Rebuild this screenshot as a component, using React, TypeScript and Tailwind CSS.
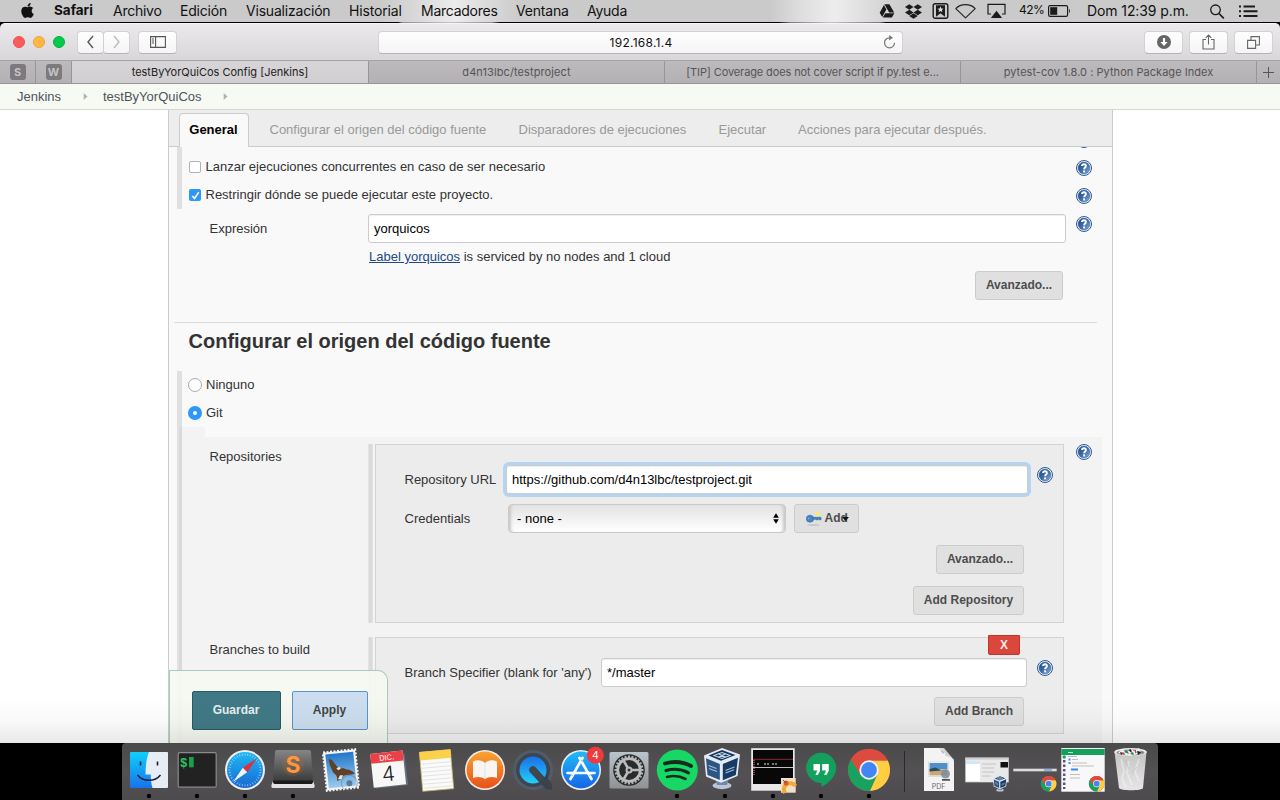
import React from "react";
import { FaApple, FaDropbox } from "react-icons/fa";

/* ---------- Menu bar ---------- */

function MenuBar() {
  return (
    <div className="h-[23px] shrink-0 bg-[linear-gradient(90deg,#000_0,#000_398px,#8e8e8e_402px,#c4c4c4_450px,#8e8e8e_492px,#000_500px,#000_778px,#777_790px,#c4c4c4_830px,#777_880px,#000_886px)]">
      <div className="flex h-[22px] items-center bg-[linear-gradient(90deg,#cacaca_0,#cacaca_380px,#d6d6d6_410px,#ececec_455px,#dedede_480px,#cbcbcb_520px,#cacaca_770px,#dedede_800px,#ededed_835px,#dcdcdc_870px,#cacaca_910px)] font-[Inter,sans-serif] text-[14px] text-[#111] [&>span]:pb-[2px]">
        <div className="flex w-[54px] justify-center pb-px">
          <FaApple className="h-[17px] w-[17px]" />
        </div>
        <span className="w-[59px] text-[13.5px] font-bold">Safari</span>
        <span className="w-[67px] tracking-[-0.25px]">Archivo</span>
        <span className="w-[66px] tracking-[-0.2px]">Edición</span>
        <span className="w-[103px] tracking-[-0.2px]">Visualización</span>
        <span className="w-[72px] tracking-[-0.15px]">Historial</span>
        <span className="w-[95px] tracking-[-0.25px]">Marcadores</span>
        <span className="w-[71px] tracking-[-0.2px]">Ventana</span>
        <span className="w-[60px] tracking-[-0.25px]">Ayuda</span>
        <div className="ml-auto flex items-center [&>span]:pb-[2px]">
          <svg className="mr-[10px] h-[22px] w-[16px]" viewBox="0 0 16 22" fill="#1b1b1b">
            <path d="M5.4 4.3h5l4.8 8.2h-5z" />
            <path d="M4.9 5.1l2.5 4.3L3.2 17 .7 12.7z" />
            <path d="M6.3 13.2h9.1L12.9 17.5H3.8z" />
          </svg>
          <FaDropbox className="mr-[10px] h-[17px] w-[17px] text-[#1b1b1b]" />
          <svg className="mr-[6px] h-[22px] w-[17px]" viewBox="0 0 17 22">
            <rect x="1.2" y="3.7" width="14.6" height="14.6" rx="2" fill="none" stroke="#1b1b1b" strokeWidth="1.4" />
            <path d="M4 5.3h9v11.5l-4.5-3.6L4 16.800z" fill="#1b1b1b" />
            <path d="M8.500 6.500l.9 2 2.100.2-1.600 1.400.5 2.100-1.900-1.100-1.900 1.100.5-2.100-1.600-1.400 2.100-.2z" fill="#ddd" />
          </svg>
          <svg className="mr-[11px] h-[22px] w-[21px]" viewBox="0 0 21 22">
            <path d="M.8 8.600C5.500 3.300 15.500 3.300 20.200 8.600L10.500 17.900z" fill="none" stroke="#222" strokeWidth="1.1" strokeLinejoin="round" />
          </svg>
          <svg className="mr-[13px] h-[22px] w-[19px]" viewBox="0 0 19 22">
            <path d="M4 14H1V4.300h17V14h-3" fill="none" stroke="#1b1b1b" strokeWidth="1.2" />
            <path d="M9.500 10.800l5.600 7.200H3.900z" fill="#1b1b1b" />
          </svg>
          <span className="w-[29px] text-[12px] tracking-[-0.5px]">42%</span>
          <svg className="mr-[16px] h-[22px] w-[23px]" viewBox="0 0 23 22">
            <rect x=".6" y="5.600" width="19" height="10.800" rx="1.600" fill="none" stroke="#1b1b1b" strokeWidth="1.200" />
            <rect x="2.200" y="7.200" width="7" height="7.600" fill="#1b1b1b" />
            <path d="M21 9c1.200.5 1.200 3.500 0 4z" fill="#1b1b1b" />
          </svg>
          <span className="w-[122px] tracking-[-0.1px] whitespace-nowrap">Dom 12:39 p.m.</span>
          <svg className="mr-[14px] h-[22px] w-[16px]" viewBox="0 0 16 22">
            <circle cx="6.500" cy="9.800" r="4.800" fill="none" stroke="#1b1b1b" strokeWidth="1.300" />
            <path d="M10 13.500l4.800 4.800" stroke="#1b1b1b" strokeWidth="1.700" />
          </svg>
          <svg className="mr-[22px] h-[22px] w-[19px]" viewBox="0 0 19 22" fill="#1b1b1b">
            <path d="M0 5.500h2v2H0zM0 10.200h2v2H0zM0 15h2v2H0zM4.500 5.500h11.500v2H4.500zM4.500 10.200h14v2h-14zM4.500 15h14v2h-14z" />
          </svg>
        </div>
      </div>
    </div>
  );
}

/* ---------- Browser chrome ---------- */

const toolButton =
  "flex h-[23px] items-center justify-center rounded-[4px] border border-[#d3d1d3] border-b-[#b5b3b5] bg-[linear-gradient(#fefefe,#f5f5f5)]";

function Toolbar() {
  return (
    <div className="flex h-[37px] shrink-0 items-center rounded-t-[5px] border-t border-[#f6f5f6] bg-[linear-gradient(#ebe9eb,#d9d7d9)]">
      <div className="ml-[13px] flex w-[64px] gap-[8px]">
        <i className="h-3 w-3 rounded-full border border-[#ef4f50] bg-[#fc5b5c]" />
        <i className="h-3 w-3 rounded-full border border-[#efa236] bg-[#fdb944]" />
        <i className="h-3 w-3 rounded-full border border-[#00b33c] bg-[#00c94c]" />
      </div>
      <div className={`${toolButton} w-[27px]`}>
        <svg className="h-[14px] w-[9px]" viewBox="0 0 9 14"><path d="M7 1L2 7l5 6" fill="none" stroke="#555" strokeWidth="1.400" /></svg>
      </div>
      <div className={`${toolButton} w-[27px] -ml-px`}>
        <svg className="h-[14px] w-[9px]" viewBox="0 0 9 14"><path d="M2 1l5 6-5 6" fill="none" stroke="#bcbcbc" strokeWidth="1.400" /></svg>
      </div>
      <div className={`${toolButton} ml-[8px] w-[39px]`}>
        <svg className="h-[12px] w-[16px]" viewBox="0 0 16 12"><path d="M.6.600h14.800v10.800H.600zM5.600.600v10.800M2 3h2M2 5h2M2 7h2" fill="none" stroke="#555" strokeWidth="1.100" /></svg>
      </div>
      <div className={`${toolButton} ml-[201px] w-[525px] pr-[6px] text-[12px]`}>
        <span className="flex-1 pt-px pl-[20px] text-center font-[Inter,sans-serif] tracking-[0.25px] text-[#111]">192.168.1.4</span>
        <svg className="h-[15px] w-[13px]" viewBox="0 0 13 15">
          <path d="M11.500 7.800a5 5 0 1 1-5-5h1" fill="none" stroke="#777" strokeWidth="1.200" />
          <path d="M6.200 0l3.800 2.800-3.800 2.800z" fill="#777" />
        </svg>
      </div>
      <div className={`${toolButton} ml-[241px] w-[39px]`}>
        <svg className="h-[14px] w-[14px]" viewBox="0 0 14 14"><circle cx="7" cy="7" r="7" fill="#666" /><path d="M5.900 3h2.200v4h2.500L7 11 3.400 7h2.500z" fill="#fff" /></svg>
      </div>
      <div className={`${toolButton} ml-[6px] w-[39px]`}>
        <svg className="h-[16px] w-[13px]" viewBox="0 0 13 16"><path d="M4 5.500H1v9.500h11V5.500H9M6.500 10.500V1M3.700 3.800l2.800-2.800 2.800 2.800" fill="none" stroke="#666" strokeWidth="1.100" /></svg>
      </div>
      <div className={`${toolButton} ml-[6px] w-[39px]`}>
        <svg className="h-[13px] w-[13px]" viewBox="0 0 13 13"><path d="M.6 4.400h8v8h-8zM4 4V.600h8.400V9H9" fill="none" stroke="#666" strokeWidth="1.100" /></svg>
      </div>
    </div>
  );
}

const browserTab =
  "flex h-full w-[296px] items-center justify-center border-r border-[#979597] pt-px whitespace-nowrap";

function BrowserTabs() {
  return (
    <div className="flex h-[24px] shrink-0 items-center border-y border-t-[#a5a3a5] border-b-[#979597] bg-[linear-gradient(#bcbabc,#b3b1b3)] font-[Inter,sans-serif] text-[11px] text-[#565456]">
      <div className="flex h-full w-[36px] items-center justify-center border-r border-[#979597]">
        <b className="flex h-4 w-4 items-center justify-center rounded-[3px] bg-[#7c7a7c] text-[#c5c3c5]">S</b>
      </div>
      <div className="flex h-full w-[36px] items-center justify-center border-r border-[#979597]">
        <b className="flex h-4 w-4 items-center justify-center rounded-[3px] bg-[#7c7a7c] text-[#c5c3c5]">W</b>
      </div>
      <div className={`${browserTab} w-[297px] bg-[linear-gradient(#d7d5d7,#d0ced0)] text-[#222]`}>testByYorQuiCos Config [Jenkins]</div>
      <div className={`${browserTab} tracking-[0.1px]`}>d4n13lbc/testproject</div>
      <div className={`${browserTab} tracking-[-0.11px]`}>[TIP] Coverage does not cover script if py.test e...</div>
      <div className={`${browserTab} tracking-[0.04px]`}>pytest-cov 1.8.0 : Python Package Index</div>
      <div className="flex h-full flex-1 items-center justify-center">
        <svg className="h-[11px] w-[11px]" viewBox="0 0 11 11"><path d="M5.500 0v11M0 5.500h11" stroke="#555" /></svg>
      </div>
    </div>
  );
}

function Breadcrumbs() {
  const arrow = (
    <svg className="h-[7px] w-[5px]" viewBox="0 0 5 7"><path d="M.7 0L4.500 3.500.7 7z" fill="#b0b3ae" /></svg>
  );
  return (
    <div className="flex h-[26px] shrink-0 items-center border-b border-[#d3d7cf] bg-[#f6faf2] pl-[17px] text-[13px] text-[#4d545d]">
      <span className="w-[66px]">Jenkins</span>
      {arrow}
      <span className="ml-[15px] w-[120px]">testByYorQuiCos</span>
      {arrow}
    </div>
  );
}

/* ---------- Form pieces ---------- */

function Help({ className = "" }: { className?: string }) {
  return (
    <svg className={`h-4 w-4 shrink-0 ${className}`} viewBox="0 0 16 16">
      <defs>
        <linearGradient id="helpFill" x1="0" y1="0" x2="1" y2="1">
          <stop offset="0" stopColor="#204a87" />
          <stop offset=".5" stopColor="#3c6ba8" />
          <stop offset="1" stopColor="#8db2dd" />
        </linearGradient>
      </defs>
      <circle cx="8" cy="8" r="7.500" fill="#fff" stroke="#2c5794" />
      <circle cx="8" cy="8" r="6" fill="url(#helpFill)" stroke="#315f9c" strokeWidth=".5" />
      <path d="M6 6C6.200 3.700 9.900 3.800 9.900 5.900 9.900 7.500 8.100 7.400 8.100 9.200" fill="none" stroke="#fff" strokeWidth="1.900" />
      <rect x="7.100" y="10.400" width="2" height="2" fill="#fff" />
    </svg>
  );
}

const field =
  "h-[29px] rounded-[3px] border border-[#ccc] bg-white px-[5px] text-[13px] text-black outline-none shadow-[inset_0_1px_1px_rgba(0,0,0,0.07)]";
const button =
  "flex h-[29px] items-center justify-center rounded-[3px] border border-[#cccccc] bg-[#e0e0e0] pb-px text-[12px] font-bold text-[#4d4d4d] whitespace-nowrap";

function SectionTabs() {
  return (
    <div className="flex h-[37px] shrink-0 items-end bg-[#ededed] text-[13px] text-[#999] shadow-[inset_0_-1px_0_#ccc]">
      <div className="ml-[10px] flex h-[34px] w-[70px] items-center justify-center rounded-t-[4px] border border-b-0 border-[#ccc] bg-[#f9f9f9] pr-px pb-[2px] font-bold text-black">General</div>
      <span className="ml-[20.500px] flex h-[34px] w-[249px] items-center">Configurar el origen del código fuente</span>
      <span className="flex h-[34px] w-[200px] items-center">Disparadores de ejecuciones</span>
      <span className="flex h-[34px] w-[79.500px] items-center">Ejecutar</span>
      <span className="flex h-[34px] items-center">Acciones para ejecutar después.</span>
    </div>
  );
}

function GeneralSection() {
  return (
    <section className="flex h-[175px] shrink-0 flex-col pl-[8px]">
      <div className="flex h-[62px] flex-col border-l-[5px] border-[#e0e0e0] pl-[7px]">
        <div className="flex h-[6px] items-start overflow-hidden">
          <Help className="mt-[-15px] ml-[887px]" />
        </div>
        <div className="flex h-[28px] items-center">
          <i className="h-3 w-3 rounded-[2px] border border-[#b0b0b0] bg-white" />
          <span className="ml-[4.500px] flex-1">Lanzar ejecuciones concurrentes en caso de ser necesario</span>
          <Help className="mt-[2px] mr-[20px]" />
        </div>
        <div className="flex h-[28px] items-center">
          <i className="flex h-3 w-3 items-center justify-center rounded-[2px] bg-[#2f97f8]">
            <svg className="h-[9px] w-[9px]" viewBox="0 0 9 9"><path d="M1.300 5l2.200 2.500L7.700 1.300" fill="none" stroke="#fff" strokeWidth="1.600" /></svg>
          </i>
          <span className="ml-[4.500px] flex-1">Restringir dónde se puede ejecutar este proyecto.</span>
          <Help className="mt-[2px] mr-[20px]" />
        </div>
      </div>
      <div className="mt-[5px] flex h-[29px] items-start pl-[32px]">
        <label className="mt-[5px] w-[159px] pl-[0.500px]">Expresión</label>
        <input className={`${field} w-[698px]`} defaultValue="yorquicos" />
        <Help className="mt-[2px] ml-[10px]" />
      </div>
      <p className="mt-[4px] h-[20px] pl-[192px]">
        <a className="text-[#204a87] underline">Label yorquicos</a> is serviced by no nodes and 1 cloud
      </p>
      <button className={`${button} mt-[4px] mr-[49px] w-[88px] self-end`}>Avanzado...</button>
    </section>
  );
}

function Repositories() {
  return (
    <div className="flex h-[179px] items-start">
      <span className="w-[159px] pt-[3px] pl-[0.500px]">Repositories</span>
      <div className="h-full w-[5px] border-x border-[#e3e3e3] bg-[#dadada]" />
      <div className="ml-[2px] flex h-full w-[689px] flex-col border border-[#d3d3d3] bg-[#ececec] pl-[28px]">
        <div className="mt-[20px] flex h-[29px] items-center">
          <label className="w-[102px] pl-[0.500px]">Repository URL</label>
          <input className={`${field} w-[522px] ring-[3px] ring-[#b3d5f2]`} defaultValue="https://github.com/d4n13lbc/testproject.git" />
          <Help className="mb-[9px] ml-[9px]" />
        </div>
        <div className="mt-[10px] flex h-[29px] items-center">
          <label className="w-[104px] pl-[0.500px]">Credentials</label>
          <div className="flex h-[29px] w-[278px] items-center justify-between rounded-[4px] border border-[#cacaca] bg-[linear-gradient(#e3e3e3,#fff)] pr-[6px] pl-[8px] text-black shadow-[inset_4px_0_3px_-2px_#c8c8c8,inset_-4px_0_3px_-2px_#c8c8c8]">
            <span>- none -</span>
            <svg className="h-[11px] w-[6px]" viewBox="0 0 7 12"><path d="M3.500 0l3.300 5H.200zM3.500 12l3.300-5H.200z" /></svg>
          </div>
          <button className={`${button} relative ml-[8px] w-[65px] justify-start pl-[11px]`}>
            <svg className="h-[16px] w-[16px]" viewBox="0 0 16 16">
              <ellipse cx="7.500" cy="15" rx="6" ry="1" fill="#c8c8c8" />
              <circle cx="11.700" cy="4.200" r="2.300" fill="#f8ec76" />
              <ellipse cx="4" cy="8.700" rx="3.700" ry="3.500" fill="#4586c4" stroke="#34699f" strokeWidth=".6" />
              <path d="M6.500 7.300H15v2.600h-1.500v-.8h-1.500v.8h-1.500v-.6H7z" fill="#4586c4" stroke="#34699f" strokeWidth=".6" />
              <circle cx="2.700" cy="8.500" r=".8" fill="#8fb6da" />
            </svg>
            <span className="ml-[2.500px]">Add</span>
            <svg className="absolute top-[11px] left-[47px] h-[5px] w-[7px]" viewBox="0 0 7 5"><path d="M0 1h7L3.500 5z" fill="#111" /></svg>
          </button>
        </div>
        <button className={`${button} mt-[12px] mr-[39px] w-[88px] shrink-0 self-end`}>Avanzado...</button>
        <button className={`${button} mt-[12px] mr-[39px] w-[111px] shrink-0 self-end`}>Add Repository</button>
      </div>
      <Help className="ml-[12px]" />
    </div>
  );
}

function Branches() {
  return (
    <div className="mt-[14px] flex h-[97px] items-start">
      <span className="w-[159px] pt-[3px] pl-[0.500px]">Branches to build</span>
      <div className="h-full w-[5px] border-x border-[#e3e3e3] bg-[#dadada]" />
      <div className="ml-[2px] flex h-full w-[689px] flex-col border border-[#d3d3d3] bg-[#ececec] pl-[28px]">
        <button className="mt-[-3px] mr-[43px] flex h-[20px] w-[32px] items-center justify-center self-end rounded-b-[2px] border border-[#c5342a] bg-[#d9473d] text-[12px] font-bold text-[#f5e9e8]">X</button>
        <div className="mt-[3px] flex h-[29px] items-center">
          <label className="w-[197px] pl-[0.500px] whitespace-nowrap">Branch Specifier (blank for 'any')</label>
          <input className={`${field} w-[426px]`} defaultValue="*/master" />
          <Help className="mb-[9px] ml-[10px]" />
        </div>
        <button className={`${button} mt-[10px] mr-[39px] w-[90px] shrink-0 self-end`}>Add Branch</button>
      </div>
    </div>
  );
}

function SourceSection() {
  return (
    <section className="flex flex-1 flex-col">
      <hr className="mr-[15px] ml-[5px] border-t border-[#dcdcdc]" />
      <h2 className="flex h-[48px] items-start pt-[8px] pl-[19.500px] text-[20px] font-bold text-[#333]">Configurar el origen del código fuente</h2>
      <div className="ml-[8px] h-[56px] border-l-[5px] border-[#e0e0e0] pl-[6px]">
        <div className="flex h-[28px] items-center gap-[4px]">
          <i className="h-[14px] w-[14px] rounded-full border border-[#aaa] bg-white" />Ninguno
        </div>
        <div className="flex h-[28px] items-center gap-[4px]">
          <i className="h-[14px] w-[14px] rounded-full border-5 border-[#2f97f8] bg-white" />Git
        </div>
      </div>
      <div className="ml-[8px] flex flex-1">
        <div className="w-[2px] bg-[#e2e2e2]" />
        <div className="w-[3px] bg-[#d9d9d9]" />
        <div className="w-[23px] shrink-0 bg-[#f3f3f3]" />
        <div className="mt-[10px] mr-[10px] flex-1 bg-[#f3f3f3] pt-[7px] pl-[4px]">
          <Repositories />
          <Branches />
        </div>
      </div>
    </section>
  );
}

function ConfigPage() {
  return (
    <main className="relative flex h-[633px] shrink-0 justify-center overflow-hidden bg-white text-[13px] leading-[20px] text-[#333]">
      <div className="ml-[1px] flex h-full w-[945px] flex-col border-x border-[#ccc] bg-[#f9f9f9]">
        <SectionTabs />
        <GeneralSection />
        <SourceSection />
      </div>
      <div className="absolute bottom-0 left-[169px] flex h-[73px] w-[219px] items-start gap-[11px] rounded-tr-[10px] border border-b-0 border-[#a9cbbb] bg-[#f5f9f1]/90 pt-[20px] pl-[22px] text-[12px] font-bold">
        <button className="h-[39px] w-[89px] rounded-[2px] border border-[#2a5966] bg-[#407985] pr-px pb-[2px] text-[#e6eef0]">Guardar</button>
        <button className="h-[39px] w-[76px] rounded-[2px] border border-[#5c93c6] bg-[#cbddee] pr-px pb-[2px] text-[#444]">Apply</button>
      </div>
      <div className="pointer-events-none absolute inset-x-0 bottom-0 h-[44px] bg-[linear-gradient(rgba(0,0,0,0),rgba(0,0,0,0.025)_50%,rgba(0,0,0,0.085))]" />
    </main>
  );
}

/* ---------- Dock ---------- */

function Chrome({ x, y, s }: { x: number; y: number; s: number }) {
  return (
    <g transform={`translate(${x} ${y}) scale(${s})`}>
      <circle r="21" fill="#dd5044" />
      <path d="M-18.200-10.500A21 21 0 0 0 1.500 20.950L8.500 5 0 0-8 5z" fill="#19a15f" />
      <path d="M0-9.500H18.700A21 21 0 0 1 1 21L8.200 5z" fill="#ffce43" />
      <path d="M-18.200-10.500A21 21 0 0 1 18.700-9.500H0L-8.200 4.800z" fill="#dd4b3e" />
      <circle r="9.700" fill="#f1f1f1" />
      <circle r="7.900" fill="#4285f4" />
    </g>
  );
}

function Cube({ x, y, s }: { x: number; y: number; s: number }) {
  return (
    <g transform={`translate(${x} ${y}) scale(${s})`}>
      <ellipse cx="18" cy="37.500" rx="9.500" ry="3.700" fill="#b9c6d8" />
      <path d="M11 30h14l-2 7H13z" fill="#7388a8" />
      <path d="M0 7.500L18 0l18 6.500L33.500 28 17 34.800 2 28.500z" fill="#e3ebf3" />
      <path d="M4.500 7.500L18 2l13.500 5L17 12.800z" fill="#17365f" />
      <path d="M2 10.300L15.800 16v16L3.500 27z" fill="#2c5583" />
      <path d="M18.800 16L34 9.700 31.800 27l-13 5.300z" fill="#173a66" />
      <path d="M10 7.500l8-3 8 3-8 3zM14 5.500l8 4M22 5.500l-8 4" fill="none" stroke="#c7d8e8" strokeWidth="1.100" />
      <path d="M4.500 17.500l8 3M5 20.500l8 3M21.500 22.500l9-3.500M21.500 25l8.500-3.300" stroke="#a6bdd4" strokeWidth="1.200" />
    </g>
  );
}

const teeth = Array.from({ length: 24 }, (_, i) => i * 15);
const slots = Array.from({ length: 36 }, (_, i) => i * 10);

const icons: { running?: boolean; art: React.ReactNode }[] = [
  {
    running: true,
    art: (
      <>
        <rect x="5" y="9" width="38" height="36" rx="1" fill="url(#finderBlue)" />
        <path d="M24 9h18a1 1 0 0 1 1 1v34a1 1 0 0 1-1 1H27.500c-1.500-5-1.700-9-1.700-13.500H20.500C20.500 23 21.500 15 24 9z" fill="#e6edf5" />
        <path d="M15.500 18.500v4M32.500 18.500v4" stroke="#123" strokeWidth="1.600" />
        <path d="M12.500 32c5.500 7 17.500 7 23 0" fill="none" stroke="#123" strokeWidth="1.500" />
      </>
    ),
  },
  {
    running: true,
    art: (
      <>
        <rect x="5.200" y="9.700" width="38" height="34.500" rx="1.500" fill="#222" stroke="#8b8b8b" strokeWidth="1.200" />
        <text x="7" y="23.500" fontSize="12.500" fontWeight="bold" fontFamily="Liberation Mono, monospace" fill="#29c565">$</text>
        <rect x="16" y="14" width="4.700" height="10.300" fill="#1aa04b" />
      </>
    ),
  },
  {
    running: true,
    art: (
      <>
        <circle cx="24" cy="27" r="20" fill="#eee" />
        <circle cx="24" cy="27" r="18" fill="url(#safariBlue)" />
        {slots.map((a) => (
          <path key={a} d="M24 10.500v2" stroke="#cceaff" strokeWidth=".6" transform={`rotate(${a} 24 27)`} />
        ))}
        <path d="M36 15L21.800 24.800l4.400 4.400z" fill="#e33038" />
        <path d="M12 39l9.800-14.200 4.400 4.400z" fill="#f3f3f3" />
      </>
    ),
  },
  {
    running: true,
    art: (
      <>
        <path d="M5 35h38l2.500 7c.6 2-.2 3-1.500 3H4c-1.300 0-2-1-1.500-3z" fill="#e2e2e2" />
        <path d="M8 7h32c1.500 0 2 1 2 2l2 29c0 2-1 3-2 3H6c-1 0-2-1-2-3L6 9c0-1 .5-2 2-2z" fill="url(#sublimeGrey)" />
        <path d="M4 37.500h40c0 2.500-1 3.500-2 3.500H6c-1 0-2-1-2-3.500z" fill="#1b1b1b" />
        <circle cx="24" cy="22" r="11" fill="#c96f2b" opacity=".15" />
        <text x="24" y="30" textAnchor="middle" fontSize="23" fontWeight="bold" fontFamily="Inter, sans-serif" fill="#ff963b">S</text>
      </>
    ),
  },
  {
    art: (
      <g transform="rotate(-6 24 27)">
        <rect x="8" y="8" width="32" height="38" fill="#f3f3f3" stroke="#f3f3f3" strokeWidth="2.500" strokeDasharray="2 1.500" />
        <rect x="10" y="10" width="28" height="34" fill="url(#mailBlue)" />
        <path d="M13 14.500c1.500 1 2.500 1 3.500 2.500l4.500 7 3 1.500c2.500-.5 4 .5 5.500 1.500 3 .5 6.500 2 8 5.500-3-.5-5 .5-7.500 0l-4 .5c-2 3-4.500 4-7 4.500.5-2 .5-4-.5-6-2.500-2-3.500-4.500-4-7.500-1.500-3-1.500-6-1.500-9.500z" fill="#5f4028" />
        <path d="M19.500 25l3-1.500 1.500 2-2.500 1.500zM20 36l2.500-4 3 .5-2 3.500z" fill="#f0e7dc" />
        <circle cx="31" cy="41" r="8" fill="none" stroke="#5b6670" strokeWidth="1" opacity=".4" />
        <circle cx="31" cy="41" r="3" fill="#27425c" opacity=".55" />
      </g>
    ),
  },
  {
    art: (
      <g transform="rotate(-6 24 27)">
        <path d="M8 12h33l.5 32H9z" fill="#64717b" />
        <rect x="7" y="9" width="32.500" height="34" fill="#f7f7f7" />
        <rect x="7" y="9" width="32.500" height="10" fill="#ed4046" />
        <text x="23" y="17" textAnchor="middle" fontSize="7.500" fontFamily="Inter, sans-serif" fill="#fff">DIC.</text>
        <text x="23" y="38" textAnchor="middle" fontSize="21" fontWeight="300" fontFamily="Inter, sans-serif" fill="#222">4</text>
      </g>
    ),
  },
  {
    art: (
      <g transform="rotate(-5 24 27)">
        <rect x="8" y="8" width="31" height="39" fill="#fafafa" stroke="#cdb96b" strokeWidth=".8" />
        <rect x="8" y="7.500" width="31" height="8.500" fill="#fbd04b" />
        <path d="M9 20h29M9 24h29M9 28h29M9 32h29M9 36h29M9 40h29M9 44h29" stroke="#e3e3e3" />
      </g>
    ),
  },
  {
    art: (
      <>
        <circle cx="24" cy="27" r="20" fill="#f5ece6" />
        <circle cx="24" cy="27" r="18.500" fill="url(#booksOrange)" />
        <path d="M24 20c-3-3-8-3.500-12-1.500v16.500c4-1.500 9-1.500 12 1.200 3-2.700 8-2.700 12-1.200V18.500C32 16.500 27 17 24 20z" fill="#f8f5f3" />
        <path d="M24 20v16" stroke="#ddd" strokeWidth=".8" />
      </>
    ),
  },
  {
    art: (
      <>
        <circle cx="24" cy="27" r="20" fill="#515c69" />
        <circle cx="24" cy="27" r="17" fill="#3d4550" />
        <circle cx="24" cy="27" r="13.500" fill="url(#quickBlue)" />
        <path d="M24 27l12 13" stroke="#3e4650" strokeWidth="7.500" strokeLinecap="round" />
        <path d="M31 39l6-6 6 8v5.500h-5.500z" fill="#3a424c" />
      </>
    ),
  },
  {
    art: (
      <>
        <circle cx="24" cy="27" r="20" fill="#ebf2f8" />
        <circle cx="24" cy="27" r="18.500" fill="url(#storeBlue)" />
        <path d="M25.500 15L13.500 36M22.500 15l12 21M10.500 30h27" stroke="#fff" strokeWidth="2.700" strokeLinecap="round" />
        <path d="M23.500 17l3 1.700M12.500 31l4 2.200M31.500 33l4-2" stroke="#9bc9f3" strokeWidth="1" />
        <circle cx="38.300" cy="12.300" r="8.500" fill="#f03a3c" />
        <text x="38.300" y="16" textAnchor="middle" fontSize="10.500" fontFamily="Inter, sans-serif" fill="#fff">4</text>
      </>
    ),
  },
  {
    art: (
      <>
        <rect x="4.500" y="9" width="39" height="36.500" rx="1.500" fill="url(#silver)" />
        <circle cx="24" cy="27" r="15.800" fill="#2b2b2b" />
        {teeth.map((a) => (
          <path key={a} d="M23 12.500h2v3h-2z" fill="#aeb1b3" transform={`rotate(${a} 24 27)`} />
        ))}
        <circle cx="24" cy="27" r="11.300" fill="none" stroke="#b9bcbe" strokeWidth="2.800" />
        <circle cx="24" cy="27" r="3.500" fill="#b9bcbe" />
        <path d="M24 27h11M24 27l-5.500-9.500M24 27l-5.500 9.500" stroke="#b9bcbe" strokeWidth="2.600" />
        <circle cx="24" cy="27" r="1.500" fill="#333" />
      </>
    ),
  },
  {
    running: true,
    art: (
      <>
        <circle cx="24.300" cy="27" r="20.500" fill="#17d865" />
        <path d="M12 20.500c9-2.500 18.500-1.500 26 2.500" fill="none" stroke="#182b20" strokeWidth="3.800" strokeLinecap="round" />
        <path d="M13 27.500c8-2.200 15.500-1.500 22.500 2.300" fill="none" stroke="#182b20" strokeWidth="3.200" strokeLinecap="round" />
        <path d="M14 34c7-1.800 13-1 18.500 2" fill="none" stroke="#182b20" strokeWidth="2.600" strokeLinecap="round" />
      </>
    ),
  },
  { running: true, art: <Cube x={3} y={5} s={1} /> },
  {
    running: true,
    art: (
      <>
        <rect x="2.200" y="5.200" width="43.500" height="42.500" fill="#e9e9e9" />
        <rect x="4" y="7" width="40" height="34" fill="#080808" />
        <path d="M4 16.300h40" stroke="#6c2329" strokeWidth="1.200" />
        <path d="M4 24.500h40" stroke="#eee" strokeWidth=".8" />
        <path d="M8 21h3M15 21h6M23 21h5" stroke="#777" strokeWidth="2" strokeDasharray="2 1" />
        <path d="M5 17v15" stroke="#a06070" strokeWidth="1.500" strokeDasharray="1 1" />
        <rect x="32" y="35" width="14.700" height="14.700" fill="#efe1c8" />
        <path d="M36 50a6 6 0 0 1 10.500-7" fill="none" stroke="#f1aa35" strokeWidth="4" />
        <circle cx="37" cy="40" r="2.500" fill="#df5a28" />
        <path d="M34 37l3 3" stroke="#555" />
      </>
    ),
  },
  {
    running: true,
    art: (
      <>
        <path d="M24 9.700a15.200 15.200 0 0 1 15.200 15.200C39.200 33 32 40 24.500 43.700V40A15.100 15.100 0 1 1 24 9.700z" fill="#12a05c" />
        <path d="M16.500 21h6.500v7l-2.300 4h-2.300l2-4.500h-3.900zM25.200 21h6.500v7l-2.300 4h-2.300l2-4.500h-3.900z" fill="#fff" />
      </>
    ),
  },
  { running: true, art: <Chrome x={24} y={27} s={1} /> },
];

const shelf: React.ReactNode[] = [
  <>
    <path d="M10 5h18l12 12v31H10z" fill="#f3f3f3" />
    <path d="M24 5c5 1 7 4 7.500 8 4 0 7 2 8.500 6V17L30 5z" fill="#d2d2d2" />
    <path d="M26 6l4 3-1 2z" fill="#b9a3d4" />
    <rect x="14.500" y="19" width="20" height="14.500" fill="#fff" stroke="#ddd" />
    <rect x="15.500" y="20" width="18" height="6.500" fill="#4f8fcb" />
    <path d="M15.500 26.500h18v6h-18z" fill="#c9a878" />
    <path d="M15.500 26l6-1.500 6 3-12 1z" fill="#2f4c5e" />
    <circle cx="31.500" cy="31" r="4.500" fill="#7e8c99" opacity=".85" />
    <path d="M28 36h8v1.800h-8z" fill="#555" />
    <text x="24.500" y="45.500" textAnchor="middle" fontSize="7" fontFamily="Inter, sans-serif" fill="#666">PDF</text>
  </>,
  <>
    <rect x="3.300" y="14.700" width="43.400" height="24.600" fill="#e9e9e9" />
    <path d="M3.300 15.500h43.400" stroke="#c9c9c9" strokeWidth="2" />
    <rect x="4" y="18" width="14" height="20" fill="#fff" />
    <rect x="4" y="18" width="14" height="3" fill="#d3e6f6" />
    <path d="M20 21h14M20 25h12M20 29h12M20 33h9" stroke="#c4c4c4" />
    <rect x="38.500" y="19" width="7.500" height="5.500" fill="#111" />
    <Cube x={31} y={32.500} s={0.39} />
  </>,
  <>
    <rect x="3.300" y="25.700" width="43.400" height="2.600" fill="#ddd" />
    <path d="M34 27h8" stroke="#6f9ce0" strokeWidth="1.500" />
    <Chrome x={38.700} y={40.700} s={0.37} />
  </>,
  <>
    <rect x="3.300" y="5" width="43.400" height="43.700" fill="#f8f8f8" />
    <rect x="3.300" y="6" width="43.400" height="6" fill="#13a05c" />
    <path d="M10 9.500h5" stroke="#bde6cf" />
    <circle cx="6.200" cy="14" r="1.700" fill="#19a15f" />
    <path d="M6.200 17v29" stroke="#5d5080" strokeWidth="2.500" strokeDasharray="2.500 2" />
    <path d="M10 13.500h9M14 16.500h6M14 20h15M14 23h22M12 31.500h10M12 35h10" stroke="#c0c0c0" />
    <path d="M10.500 16.500h2M10.500 20h2M13 26.500h7" stroke="#4285f4" strokeWidth="1.800" />
    <Chrome x={38.700} y={40.700} s={0.37} />
  </>,
  <>
    <path d="M8.500 9h32L37 45c-.5 3-23 3-24 0z" fill="url(#trash)" />
    <ellipse cx="24.500" cy="9" rx="16.300" ry="4" fill="#ececec" />
    <ellipse cx="24.500" cy="9.500" rx="14" ry="3" fill="#8b8b8b" />
    <path d="M12 10l4-4 4 3 4-4 4 3 5-3 3 5-12 3z" fill="#efefef" />
    <path d="M18 9l3-2 2 4zM24 11l3-2 1 3z" fill="#248467" />
    <path d="M22 7l3-1 1 4zM31 8l5 1-4 3zM14 9l3 1-2 2z" fill="#242424" />
    <path d="M16.500 9.500l2 2M29 7l1 3" stroke="#c33" strokeWidth="1.300" />
    <path d="M15 16l3 12-2 8 4 8M33 16l-4 13 4 9M23 18l-2 12 5 12" fill="none" stroke="#fff" strokeWidth="2" opacity=".35" />
    <path d="M19 17l4 9M31 24l-5 6" stroke="#aaa" opacity=".4" />
  </>,
];

function Gradients() {
  const list: [string, string, string][] = [
    ["finderBlue", "#0fd0fb", "#1873ec"],
    ["safariBlue", "#1fb8f4", "#1768d2"],
    ["sublimeGrey", "#858585", "#343434"],
    ["mailBlue", "#2478c8", "#9ccbee"],
    ["booksOrange", "#fba330", "#e8501b"],
    ["quickBlue", "#1a6fe8", "#22d0fa"],
    ["storeBlue", "#1fbbf7", "#1764e7"],
    ["silver", "#b9c4cc", "#8f9294"],
    ["trash", "#c4c4c4", "#e6e6e6"],
  ];
  return (
    <defs>
      {list.map(([id, a, b]) => (
        <linearGradient key={id} id={id} x1="0" y1="0" x2="0" y2="1">
          <stop offset="0" stopColor={a} />
          <stop offset="1" stopColor={b} />
        </linearGradient>
      ))}
    </defs>
  );
}

function Dock() {
  return (
    <div className="flex h-[57px] shrink-0 justify-center bg-black">
      <div className="flex w-[1036px] rounded-t-[4px] bg-[linear-gradient(#4b4a4b,#535153_50%,#4d4b4d)] pl-[3px]">
        {icons.map((icon, i) => (
          <svg key={i} className="h-[57px] w-[48px] shrink-0" viewBox="0 0 48 57">
            {i === 0 && <Gradients />}
            {icon.art}
            {icon.running && <circle cx="24" cy="53" r="2.200" fill="#050505" />}
          </svg>
        ))}
        <div className="flex w-[21px] shrink-0 items-center justify-center pl-[2px]">
          <div className="h-[41px] w-px bg-[#2a2a2a]" />
        </div>
        {shelf.map((art, i) => (
          <svg key={i} className="h-[57px] w-[48px] shrink-0" viewBox="0 0 48 57">{art}</svg>
        ))}
      </div>
    </div>
  );
}

export default function App() {
  return (
    <div className="flex h-[800px] w-[1280px] flex-col overflow-hidden bg-black font-['Liberation_Sans',Arial,sans-serif]">
      <MenuBar />
      <Toolbar />
      <BrowserTabs />
      <Breadcrumbs />
      <ConfigPage />
      <Dock />
    </div>
  );
}
